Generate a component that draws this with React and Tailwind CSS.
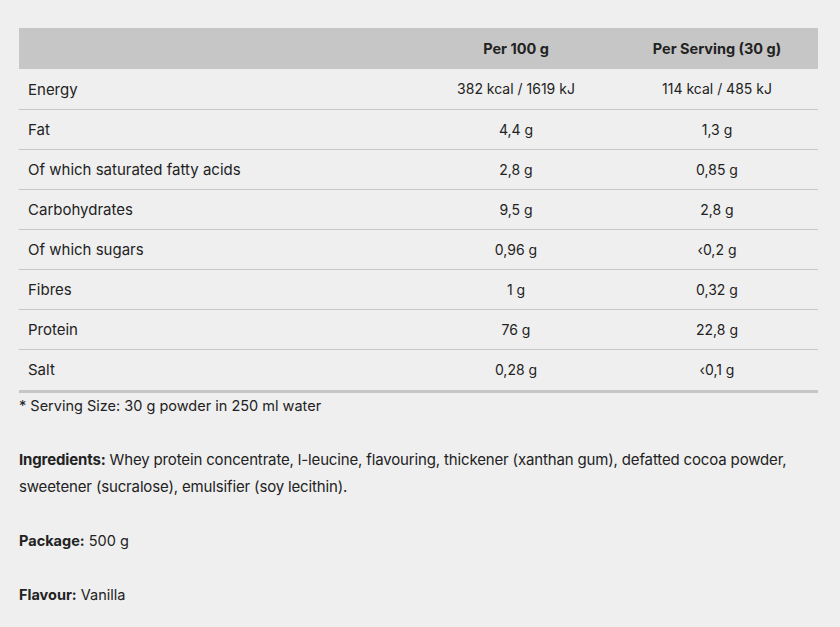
import React from "react";

const rows = [
  ["Energy", "382 kcal / 1619 kJ", "114 kcal / 485 kJ"],
  ["Fat", "4,4 g", "1,3 g"],
  ["Of which saturated fatty acids", "2,8 g", "0,85 g"],
  ["Carbohydrates", "9,5 g", "2,8 g"],
  ["Of which sugars", "0,96 g", "‹0,2 g"],
  ["Fibres", "1 g", "0,32 g"],
  ["Protein", "76 g", "22,8 g"],
  ["Salt", "0,28 g", "‹0,1 g"],
];

const App = () => {
  return (
    <div
      className="min-h-[627px] w-full bg-[#efefef] text-[#222] px-[19px] pt-[28px] text-[14px]"
      style={{ fontFamily: "Inter, 'Open Sans', sans-serif" }}
    >
      <table className="w-[799px] border-collapse">
        <thead>
          <tr className="bg-[#c6c6c6] h-[41px]">
            <th className="w-[397px]"></th>
            <th className="w-[200px] text-center font-bold text-[14.5px]">Per 100 g</th>
            <th className="text-center font-bold text-[14.5px]">Per Serving (30 g)</th>
          </tr>
        </thead>
        <tbody>
          {rows.map((r, i) => (
            <tr
              key={r[0]}
              className={
                i === rows.length - 1
                  ? "h-[42px] border-b-[3px] border-[#c6c6c6]"
                  : "h-[40px] border-b border-[#c8c8c8]"
              }
            >
              <td className="pl-[9px] pt-[2px] text-[15px]">{r[0]}</td>
              <td className="text-center">{r[1]}</td>
              <td className="text-center">{r[2]}</td>
            </tr>
          ))}
        </tbody>
      </table>
      <p className="mt-[3px] leading-[20px] text-[14.5px]">* Serving Size: 30 g powder in 250 ml water</p>
      <p className="mt-[30px] leading-[27px] text-[15px] tracking-[-0.15px] w-[802px]">
        <b>Ingredients:</b> Whey protein concentrate, l-leucine, flavouring, thickener (xanthan gum), defatted cocoa powder, sweetener (sucralose), emulsifier (soy lecithin).
      </p>
      <p className="mt-[27px] leading-[27px] text-[14.5px]">
        <b>Package:</b> 500 g
      </p>
      <p className="mt-[27px] leading-[27px] text-[14.5px]">
        <b>Flavour:</b> Vanilla
      </p>
    </div>
  );
};

export default App;
